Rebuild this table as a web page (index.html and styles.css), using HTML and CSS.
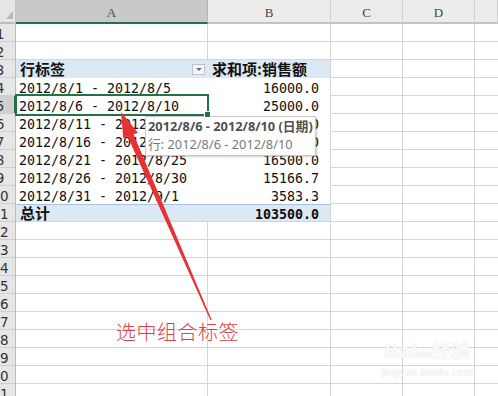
FILE: index.html
```html
<!DOCTYPE html>
<html lang="zh">
<head>
<meta charset="utf-8">
<link rel="stylesheet" href="styles.css">
</head>
<body>
<div class="sheet">
  <div class="corner"><span class="tri"></span></div>
  <div class="colhdr active">A</div>
  <div class="colhdr">B</div>
  <div class="colhdr">C</div>
  <div class="colhdr">D</div>
  <div class="colhdr"></div>

  <div class="rowhdrs">
    <div class="rh">1</div><div class="rh">2</div><div class="rh">3</div><div class="rh">4</div>
    <div class="rh active">5</div><div class="rh">6</div><div class="rh">7</div><div class="rh">8</div>
    <div class="rh">9</div><div class="rh">10</div><div class="rh">11</div><div class="rh">12</div>
    <div class="rh">13</div><div class="rh">14</div><div class="rh">15</div><div class="rh">16</div>
    <div class="rh">17</div><div class="rh">18</div><div class="rh">19</div><div class="rh">20</div>
    <div class="rh">21</div>
  </div>

  <div class="cells">
    <div class="pivot">
      <div class="pc head">行标签<span class="dd"></span></div>
      <div class="pc head">求和项:销售额</div>

      <div class="pc">2012/8/1 - 2012/8/5</div>
      <div class="pc num">16000.0</div>

      <div class="pc sel">2012/8/6 - 2012/8/10</div>
      <div class="pc num">25000.0</div>

      <div class="pc">2012/8/11 - 2012/8/15</div>
      <div class="pc num">14250.0</div>

      <div class="pc">2012/8/16 - 2012/8/20</div>
      <div class="pc num">13000.0</div>

      <div class="pc">2012/8/21 - 2012/8/25</div>
      <div class="pc num">16500.0</div>

      <div class="pc">2012/8/26 - 2012/8/30</div>
      <div class="pc num">15166.7</div>

      <div class="pc">2012/8/31 - 2012/9/1</div>
      <div class="pc num">3583.3</div>

      <div class="pc total">总计</div>
      <div class="pc total num">103500.0</div>
    </div>
  </div>
</div>

<div class="tooltip">
  <div class="tt1">2012/8/6 - 2012/8/10 (日期)</div>
  <div class="tt2">行: 2012/8/6 - 2012/8/10</div>
</div>

<svg class="arrow" width="498" height="396" viewBox="0 0 498 396">
  <polygon points="121,112 138,132.8 133.6,134.2 211.6,319.7 210.4,320.3 127.6,136.6 123.2,138.3" fill="#e63232"/>
</svg>

<div class="note">选中组合标签</div>

<div class="watermark">
  <div class="wm1">Bai<span class="paw">du</span>经验</div>
  <div class="wm2">jingyan.baidu.com</div>
</div>
</body>
</html>
```

FILE: styles.css
```css
html, body {
  margin: 0;
  padding: 0;
  background: #fff;
}
body {
  width: 498px;
  height: 396px;
  overflow: hidden;
  position: relative;
  font-family: "DejaVu Sans Mono", "Noto Sans CJK SC", monospace;
}

.sheet {
  display: grid;
  grid-template-columns: 16px 192px 123px 72px 72px 1fr;
  grid-template-rows: 24px 1fr;
  height: 396px;
  overflow: hidden;
}

.corner {
  background: #e6e6e6;
  border-right: 1px solid #c4c4c4;
  border-bottom: 2px solid #bdbdbd;
  box-sizing: border-box;
  position: relative;
  display: flex;
  align-items: flex-end;
  justify-content: flex-end;
  padding: 0 2px 3px 0;
}
.tri {
  width: 0;
  height: 0;
  border-left: 7px solid transparent;
  border-bottom: 8px solid #b9b9b9;
}

.colhdr {
  background: #ececec;
  border-right: 1px solid #cfcfcf;
  border-bottom: 2px solid #c2c2c2;
  box-sizing: border-box;
  font-family: "Liberation Serif", serif;
  font-size: 13px;
  color: #444;
  text-align: center;
  line-height: 26px;
}
.colhdr.active {
  background: #c9c9c9;
  border-bottom-color: #217346;
  border-right-color: #b5b5b5;
  color: #2c5f43;
}

.rowhdrs {
  grid-row: 2;
  grid-column: 1;
  background: #e6e6e6;
  border-right: 1px solid #bdbdbd;
  box-sizing: border-box;
  overflow: hidden;
}
.rh {
  width: 32px;
  margin-left: -16px;
  height: 18px;
  box-sizing: border-box;
  border-bottom: 1px solid #cfcfcf;
  text-align: center;
  font-family: "DejaVu Sans", sans-serif;
  font-size: 13.5px;
  line-height: 20px;
  color: #333;
}
.rh.active {
  background: #d0d0d0;
  box-shadow: inset -2px 0 0 #217346;
}

.cells {
  grid-row: 2;
  grid-column: 2 / -1;
  display: grid;
  grid-template-columns: 192px 123px 72px 72px 1fr;
  grid-template-rows: repeat(21, 18px);
  align-content: start;
  background-image:
    linear-gradient(to right,
      transparent 191px, #d6d6d6 191px 192px,
      transparent 192px 314px, #d6d6d6 314px 315px,
      transparent 315px 386px, #d6d6d6 386px 387px,
      transparent 387px 458px, #d6d6d6 458px 459px,
      transparent 459px),
    repeating-linear-gradient(to bottom, transparent 0 17px, #d6d6d6 17px 18px);
}

.pivot {
  grid-column: 1 / 3;
  grid-row: 3 / 12;
  width: 314px;
  height: 161px;
  align-self: start;
  display: grid;
  grid-template-columns: 192px 122px;
  grid-template-rows: repeat(8, 18px) 17px;
  background: #fff;
}

.pc {
  position: relative;
  box-sizing: border-box;
  padding: 2px 3px 0 3px;
  font-size: 13.3px;
  line-height: 18px;
  color: #111;
  white-space: nowrap;
}
.pc.num {
  text-align: right;
  padding-right: 11px;
}
.pc.head {
  background: #dde8f5;
  font-family: "Noto Sans CJK SC", sans-serif;
  font-weight: 700;
  font-size: 15px;
  padding: 0 3px 0 4px;
  display: flex;
  align-items: center;
  justify-content: space-between;
}
.dd {
  width: 13px;
  height: 11px;
  box-sizing: border-box;
  border: 1px solid #b9c3cf;
  background: #f4f6f9;
  position: relative;
  margin-top: 1px;
}
.dd::after {
  content: "";
  position: absolute;
  left: 3px;
  top: 3px;
  border-left: 3px solid transparent;
  border-right: 3px solid transparent;
  border-top: 3px solid #6a6a6a;
}

.pc.total {
  background: #dde8f5;
  border-top: 1px solid #a7c3e3;
  font-weight: 700;
  padding-top: 1px;
  line-height: 17px;
}
.pc.total:not(.num) {
  font-family: "Noto Sans CJK SC", sans-serif;
  font-size: 15px;
  line-height: 16px;
  padding-top: 0;
  padding-left: 4px;
}

.pc.sel::after {
  content: "";
  position: absolute;
  left: -1px;
  top: -2px;
  right: -1px;
  bottom: -2px;
  border: 2px solid #217346;
}
.pc.sel::before {
  content: "";
  position: absolute;
  right: -3px;
  bottom: -4px;
  width: 5px;
  height: 5px;
  background: #217346;
  border: 1px solid #fff;
  z-index: 2;
}

.tooltip {
  position: absolute;
  left: 145px;
  top: 116px;
  width: 171px;
  height: 40px;
  box-sizing: border-box;
  background: #fff;
  border: 1px solid #c8c8c8;
  box-shadow: 1px 1px 2px rgba(0, 0, 0, 0.18);
  padding: 0 0 0 2px;
  font-family: "Noto Sans", "Noto Sans CJK SC", sans-serif;
  font-size: 12.8px;
  line-height: 18px;
  white-space: nowrap;
  overflow: hidden;
}
.tt1 {
  font-weight: 700;
  color: #505050;
}
.tt2 {
  color: #7a7a7a;
}

.arrow {
  position: absolute;
  left: 0;
  top: 0;
}

.note {
  position: absolute;
  left: 116px;
  top: 322px;
  font-family: "Noto Sans CJK SC", sans-serif;
  font-weight: 300;
  font-size: 20px;
  line-height: 20px;
  color: #d7424b;
  letter-spacing: 0.5px;
}

.watermark {
  position: absolute;
  left: 381px;
  top: 339px;
  width: 92px;
  text-align: center;
  color: rgba(255, 255, 255, 0.92);
  text-shadow: 0 0 1px rgba(0, 0, 0, 0.2);
  font-family: "DejaVu Sans", "Noto Sans CJK SC", sans-serif;
}
.wm1 {
  font-size: 19px;
  font-weight: 700;
  line-height: 24px;
}
.paw {
  font-size: 10px;
}
.wm2 {
  font-size: 10px;
  line-height: 12px;
}
```
